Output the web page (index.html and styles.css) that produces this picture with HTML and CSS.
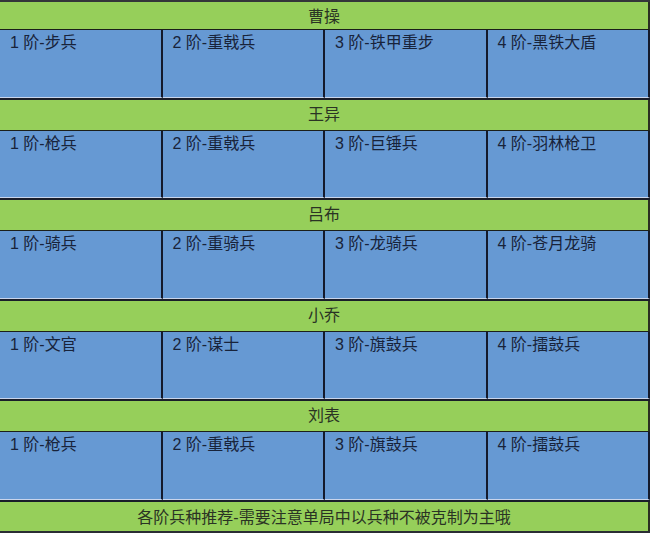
FILE: index.html
```html
<!DOCTYPE html>
<html lang="zh">
<head>
<meta charset="utf-8">
<link rel="stylesheet" href="styles.css">
</head>
<body>
<div class="sheet">
  <div class="head first">曹操</div>
  <div class="units">
    <div class="cell">1 阶-步兵</div>
    <div class="cell">2 阶-重戟兵</div>
    <div class="cell">3 阶-铁甲重步</div>
    <div class="cell">4 阶-黑铁大盾</div>
  </div>
  <div class="head">王异</div>
  <div class="units">
    <div class="cell">1 阶-枪兵</div>
    <div class="cell">2 阶-重戟兵</div>
    <div class="cell">3 阶-巨锤兵</div>
    <div class="cell">4 阶-羽林枪卫</div>
  </div>
  <div class="head">吕布</div>
  <div class="units">
    <div class="cell">1 阶-骑兵</div>
    <div class="cell">2 阶-重骑兵</div>
    <div class="cell">3 阶-龙骑兵</div>
    <div class="cell">4 阶-苍月龙骑</div>
  </div>
  <div class="head">小乔</div>
  <div class="units">
    <div class="cell">1 阶-文官</div>
    <div class="cell">2 阶-谋士</div>
    <div class="cell">3 阶-旗鼓兵</div>
    <div class="cell">4 阶-擂鼓兵</div>
  </div>
  <div class="head">刘表</div>
  <div class="units">
    <div class="cell">1 阶-枪兵</div>
    <div class="cell">2 阶-重戟兵</div>
    <div class="cell">3 阶-旗鼓兵</div>
    <div class="cell">4 阶-擂鼓兵</div>
  </div>
  <div class="head foot">各阶兵种推荐-需要注意单局中以兵种不被克制为主哦</div>
</div>
</body>
</html>
```
FILE: styles.css
```css
html, body {
  margin: 0;
  padding: 0;
  background: #ffffff;
}

.sheet {
  width: 650px;
  height: 533px;
  box-sizing: border-box;
  border-top: 2px solid #34363a;
  border-bottom: 2px solid #2a2d33;
  background: #1d2230;
  display: flex;
  flex-direction: column;
  font-family: "Liberation Sans", "Noto Sans CJK SC", sans-serif;
  font-size: 16px;
  overflow: hidden;
}

.head {
  height: 31px;
  flex: none;
  box-sizing: border-box;
  background: #96cf5a;
  border-right: 2px solid #2a2f22;
  border-bottom: 1px solid #1b1f1a;
  color: #2a3324;
  display: flex;
  align-items: center;
  justify-content: center;
  padding-bottom: 4px;
}

.head.first {
  height: 28px;
  padding-bottom: 2px;
}

.head.foot {
  flex: 1;
  height: auto;
  border-bottom: none;
  padding-bottom: 1px;
}

.units {
  flex: none;
  display: grid;
  grid-template-columns: repeat(4, 1fr);
  height: 69.6px;
  box-sizing: border-box;
  border-bottom: 2px solid #1a1e2a;
}

.cell {
  background: #6699d3;
  border-right: 2px solid #141a2c;
  border-bottom: 1px solid #c9d5ec;
  padding: 3px 0 0 10px;
  color: #18233a;
  line-height: 20px;
  white-space: nowrap;
}
```
